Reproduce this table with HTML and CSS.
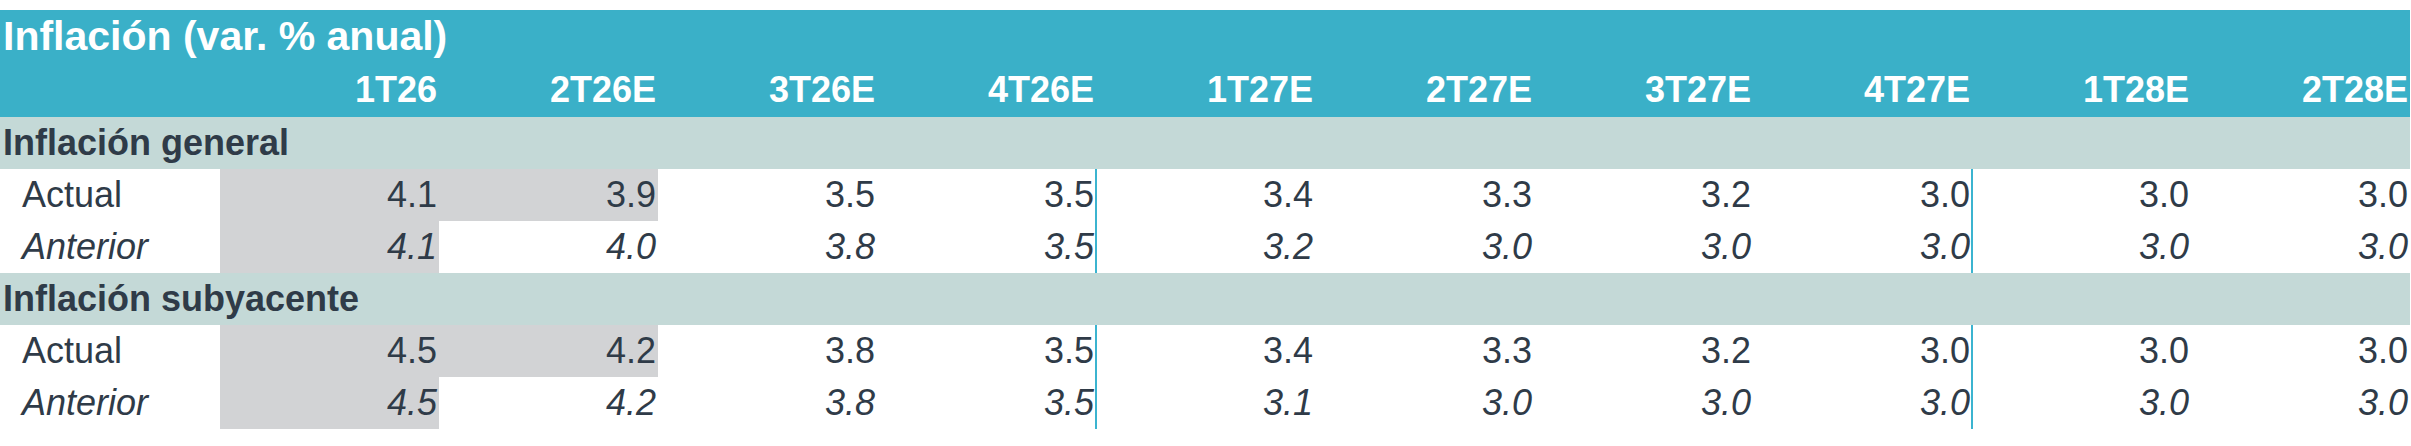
FILE: index.html
```html
<!DOCTYPE html>
<html lang="es">
<head>
<meta charset="utf-8">
<title>Inflación (var. % anual)</title>
<link rel="stylesheet" href="styles.css">
</head>
<body>
<div class="table">
  <div class="head">
    <div class="title">Inflación (var. % anual)</div>
    <div class="row cols">
      <div class="lab"></div>
      <div class="c">1T26</div><div class="c">2T26E</div><div class="c">3T26E</div><div class="c">4T26E</div>
      <div class="c">1T27E</div><div class="c">2T27E</div><div class="c">3T27E</div><div class="c">4T27E</div>
      <div class="c">1T28E</div><div class="c">2T28E</div>
    </div>
  </div>

  <div class="band">Inflación general</div>
  <div class="row data">
    <div class="lab">Actual</div>
    <div class="c hl">4.1</div><div class="c hl">3.9</div><div class="c">3.5</div><div class="c sep">3.5</div>
    <div class="c">3.4</div><div class="c">3.3</div><div class="c">3.2</div><div class="c sep">3.0</div>
    <div class="c">3.0</div><div class="c">3.0</div>
  </div>
  <div class="row data prev">
    <div class="lab">Anterior</div>
    <div class="c hl">4.1</div><div class="c">4.0</div><div class="c">3.8</div><div class="c sep">3.5</div>
    <div class="c">3.2</div><div class="c">3.0</div><div class="c">3.0</div><div class="c sep">3.0</div>
    <div class="c">3.0</div><div class="c">3.0</div>
  </div>

  <div class="band">Inflación subyacente</div>
  <div class="row data">
    <div class="lab">Actual</div>
    <div class="c hl">4.5</div><div class="c hl">4.2</div><div class="c">3.8</div><div class="c sep">3.5</div>
    <div class="c">3.4</div><div class="c">3.3</div><div class="c">3.2</div><div class="c sep">3.0</div>
    <div class="c">3.0</div><div class="c">3.0</div>
  </div>
  <div class="row data prev">
    <div class="lab">Anterior</div>
    <div class="c hl">4.5</div><div class="c">4.2</div><div class="c">3.8</div><div class="c sep">3.5</div>
    <div class="c">3.1</div><div class="c">3.0</div><div class="c">3.0</div><div class="c sep">3.0</div>
    <div class="c">3.0</div><div class="c">3.0</div>
  </div>
</div>
</body>
</html>
```

FILE: styles.css
```css
html, body {
  margin: 0;
  padding: 0;
  background: #ffffff;
}
body {
  padding-top: 10px;
  font-family: "Liberation Sans", Arial, sans-serif;
  color: #2f3b48;
}
.table {
  width: 2410px;
}
.head {
  background: #3ab0c8;
  color: #ffffff;
  font-weight: bold;
}
.title {
  height: 53px;
  line-height: 53px;
  font-size: 41px;
  padding-left: 3px;
  white-space: nowrap;
}
.row {
  display: grid;
  grid-template-columns: 220px repeat(10, 219px);
}
.cols {
  height: 54px;
  line-height: 54px;
  font-size: 36px;
}
.c {
  text-align: right;
  padding-right: 2px;
  white-space: nowrap;
}
.band {
  background: #c4d9d7;
  height: 52px;
  line-height: 52px;
  font-size: 36px;
  font-weight: bold;
  padding-left: 3px;
  white-space: nowrap;
}
.data {
  height: 52px;
  line-height: 52px;
  font-size: 36px;
}
.data .lab {
  padding-left: 22px;
}
.prev {
  font-style: italic;
}
.hl {
  background: #d2d3d5;
}
.sep {
  position: relative;
}
.sep::after {
  content: "";
  position: absolute;
  top: 0;
  bottom: 0;
  right: -1px;
  width: 2px;
  background: #3bb4d0;
}
```
